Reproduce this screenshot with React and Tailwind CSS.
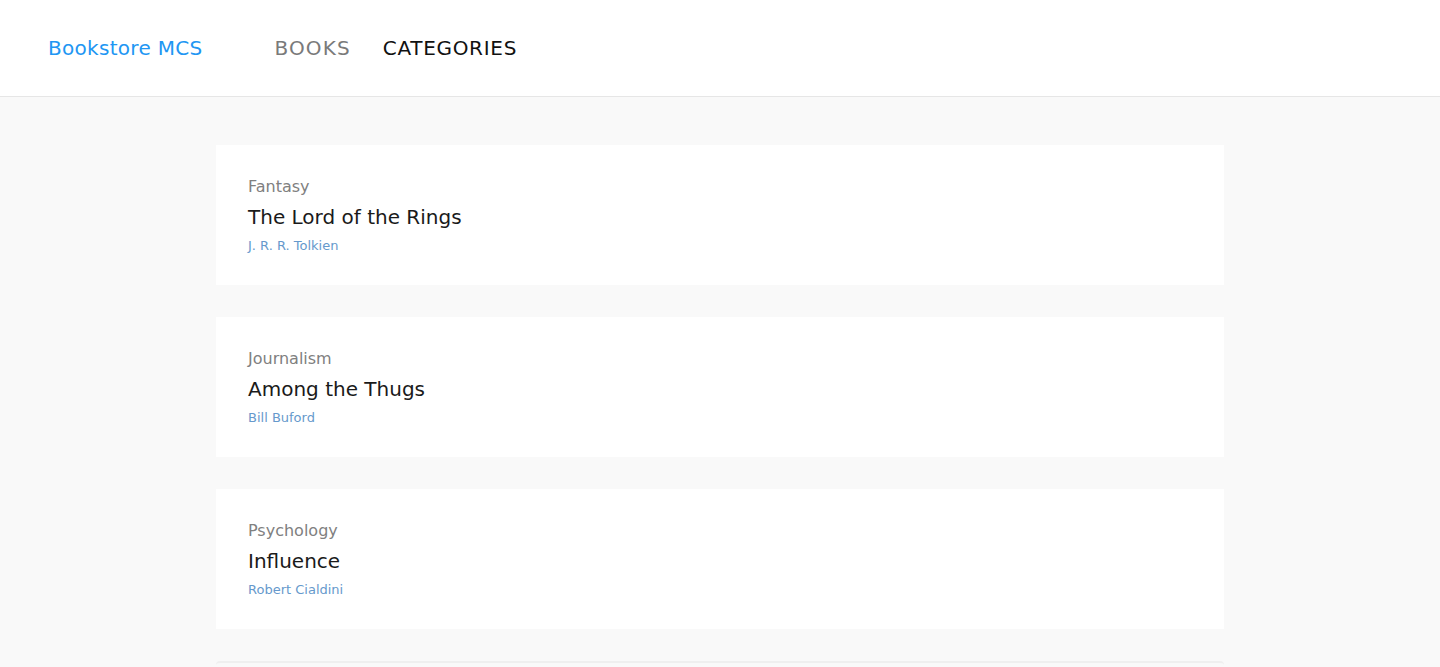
import React from "react";

const books = [
  { category: "Fantasy", title: "The Lord of the Rings", author: "J. R. R. Tolkien" },
  { category: "Journalism", title: "Among the Thugs", author: "Bill Buford" },
  { category: "Psychology", title: "Influence", author: "Robert Cialdini" },
];

export default function App() {
  return (
    <div className="min-h-screen bg-[#f9f9f9]" style={{ fontFamily: '"DejaVu Sans", sans-serif' }}>
      <header className="h-[97px] bg-white border-b border-[#e6e6e6] flex items-center px-12">
        <a className="text-[20px] text-[#2196f3] tracking-[0.3px]">Bookstore MCS</a>
        <nav className="flex items-center gap-8 ml-[72px]">
          <a className="text-[20px] text-[#7a7a7a] tracking-[1.1px]">BOOKS</a>
          <a className="text-[20px] text-[#111] tracking-[0.7px]">CATEGORIES</a>
        </nav>
      </header>
      <main className="w-[1008px] mx-auto pt-12 pb-12 flex flex-col gap-8">
        {books.map((b, i) => (
          <div key={i} className="bg-white h-[140px] px-8 pt-[31px]">
            <div className="text-[16px] leading-[22px] text-[#808080]">{b.category}</div>
            <div className="text-[20px] leading-[28px] text-[#1a1a1a] mt-[5px]">{b.title}</div>
            <div className="text-[13px] leading-[18px] text-[#6699cc] mt-[6px]">{b.author}</div>
          </div>
        ))}
        <div className="bg-[#f9f9f9] h-[140px] border-t-2 border-[#efefef] rounded-sm"></div>
      </main>
    </div>
  );
}
